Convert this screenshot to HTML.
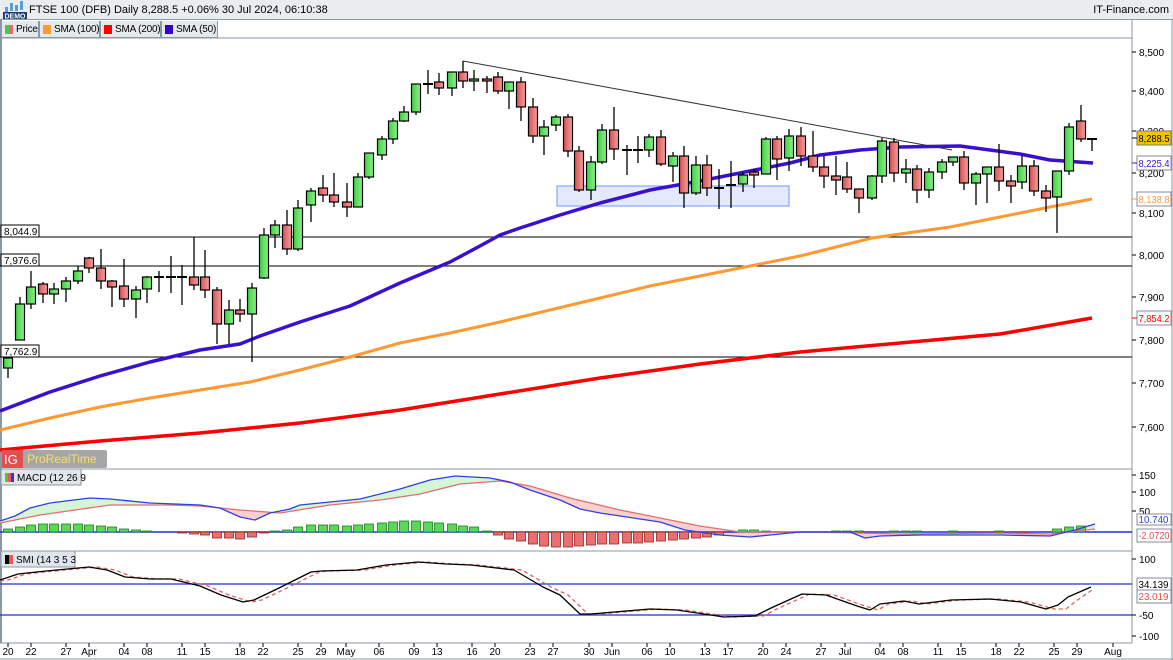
<!DOCTYPE html>
<html><head><meta charset="utf-8"><style>
*{margin:0;padding:0;box-sizing:border-box}
body{width:1173px;height:660px;overflow:hidden;background:#fff;font-family:"Liberation Sans",sans-serif;position:relative}
.hdr{position:absolute;left:0;top:0;width:1173px;height:20px;background:#e9edf0;border-bottom:1px solid #8a99a6}
.hdr .t{position:absolute;left:29px;top:4px;font-size:11px;color:#000}
.hdr .r{position:absolute;right:4px;top:4px;font-size:11px;color:#000}
.tabs{position:absolute;left:1px;top:21px;height:17px;display:flex}
.tab{height:17px;border:1px solid #8a99a6;border-top:none;background:#e4e9ed;font-size:10px;padding:0 1px 0 3px;display:flex;align-items:center;gap:3px;white-space:nowrap;overflow:hidden;letter-spacing:-0.2px}
.sq{width:8px;height:9px;display:inline-block;flex:none}
svg{position:absolute;left:0;top:0}
</style></head><body>
<div class="hdr">
<svg width="26" height="20" style="left:2px;top:0"><rect x="3" y="7" width="3" height="6" fill="#5aa0d8"/><rect x="8" y="3" width="3" height="8" fill="#5aa0d8"/><rect x="13" y="5" width="3" height="6" fill="#5aa0d8"/><rect x="18" y="1" width="3" height="9" fill="#5aa0d8"/><rect x="1" y="12" width="24" height="7" fill="#1a3a7a"/><text x="13" y="18.5" font-size="7" fill="#fff" text-anchor="middle" font-family="Liberation Sans" font-weight="bold">DEMO</text></svg>
<span class="t">FTSE 100 (DFB) Daily 8,288.5 +0.06% 30 Jul 2024, 06:10:38</span><span class="r">IT-Finance.com</span></div>
<div class="tabs">
<div class="tab" style="width:38px"><span class="sq" style="background:linear-gradient(90deg,#4c4 50%,#e66 50%)"></span>Price</div>
<div class="tab" style="width:61px"><span class="sq" style="background:#f93"></span>SMA (100)</div>
<div class="tab" style="width:61px"><span class="sq" style="background:#f00"></span>SMA (200)</div>
<div class="tab" style="width:57px"><span class="sq" style="background:#30c"></span>SMA (50)</div>
</div>
<svg id="c" width="1173" height="660" style="top:0" font-family="Liberation Sans" font-size="10"></svg>
<script>
var s='';
function L(a,b,c,d,col,w,ex){s+='<line x1="'+a+'" y1="'+b+'" x2="'+c+'" y2="'+d+'" stroke="'+col+'" stroke-width="'+(w||1)+'" '+(ex||'')+'/>';}
function P(pts,col,w,ex){s+='<polyline fill="none" points="'+pts.map(p=>p.join(',')).join(' ')+'" stroke="'+col+'" stroke-width="'+w+'" stroke-linejoin="round" '+(ex||'')+'/>';}
function T(x,y,t,col,anc,sz,ex){s+='<text x="'+x+'" y="'+y+'" fill="'+(col||'#000')+'" text-anchor="'+(anc||'start')+'" font-size="'+(sz||10)+'" '+(ex||'')+'>'+t+'</text>';}
s+='<defs><linearGradient id="g" x1="0" x2="1"><stop offset="0" stop-color="#3fcf3f"/><stop offset="1" stop-color="#8ef08e"/></linearGradient><linearGradient id="r" x1="0" x2="1"><stop offset="0" stop-color="#d85050"/><stop offset="1" stop-color="#f3a0a0"/></linearGradient></defs>';
L(0,38,1132,38,'#8a99a6');L(1132,20,1132,643,'#8a99a6');L(1,20,1,643,'#8a99a6',2);
L(0,469,1132,469,'#8a99a6');L(0,551,1132,551,'#8a99a6');L(0,643,1132,643,'#8a99a6');L(0,659,1173,659,'#8a99a6');L(1172,20,1172,660,'#8a99a6');
L(0,237,1132,237,'#000');L(0,266,1132,266,'#000');L(0,357,1132,357,'#000');
s+='<rect x="557" y="186" width="232" height="20" fill="#e4eafc" stroke="#6a9aff" stroke-width="1"/>';
L(463,61,952,150,'#333');L(463,61,463,72,'#333');
P([[0,450],[100,441],[200,433],[300,423],[400,410],[500,394],[600,378],[700,364],[800,352],[900,343],[1000,334],[1092,318]],'#f00',3.5);
P([[0,430],[50,418],[100,407],[150,398],[200,390],[250,382],[300,370],[350,357],[400,343],[450,333],[500,322],[550,310],[600,298],[650,286],[700,276],[750,266],[800,256],[872,238],[900,234],[950,227],[1000,217],[1050,207],[1092,199]],'#f93',3);
P([[0,411],[50,392],[100,376],[150,362],[200,350],[240,344],[260,336],[300,322],[350,306],[400,283],[450,262],[480,246],[500,235],[520,228],[560,215],[600,203],[650,190],[700,181],[750,171],[790,163],[820,155],[860,150],[900,147],[960,146],[990,150],[1020,154],[1050,160],[1093,163]],'#3a10d0',3.5);
var C=[[8,368,358,356,378],[20,340,304,297,340],[31,304,287,271,309],[43,284,294,282,303],[54,294,289,283,304],[66,289,281,277,302],[78,281,271,266,284],[89,258,268,257,273],[101,268,281,249,289],[112,281,287,280,307],[124,286,299,259,307],[136,299,290,286,318],[147,289,277,276,303],[159,277,277,271,292],[171,277,277,256,293],[182,277,277,265,305],[194,277,285,237,290],[205,277,290,250,298],[217,290,324,287,344],[229,324,310,300,344],[240,310,314,299,322],[252,314,288,283,362],[264,278,235,228,279],[275,235,225,220,248],[287,225,249,210,255],[298,249,208,200,251],[311,205,191,188,222],[323,188,195,175,202],[334,195,202,173,207],[347,202,207,183,217],[358,207,177,173,207],[369,177,153,153,179],[382,155,139,136,160],[393,139,121,118,144],[404,121,112,106,122],[416,112,84,84,115],[428,84,84,70,94],[439,82,88,73,95],[452,88,72,72,96],[463,72,81,61,88],[474,81,79,70,91],[487,79,81,76,93],[498,77,91,72,94],[509,91,82,82,109],[521,82,107,77,121],[533,107,136,98,143],[544,136,127,120,155],[556,125,117,115,131],[568,117,151,114,157],[579,151,190,146,192],[591,190,162,156,200],[602,162,130,124,164],[614,130,149,107,160],[627,150,150,145,175],[638,150,150,136,163],[649,150,137,134,157],[661,137,164,130,166],[673,166,156,152,182],[684,156,193,146,208],[696,193,165,156,195],[707,165,188,155,196],[719,188,188,169,209],[731,185,185,161,208],[743,184,175,172,192],[754,172,175,169,188],[766,174,139,137,174],[777,139,159,136,180],[789,158,136,129,171],[801,136,156,127,166],[813,156,167,131,172],[824,167,176,156,188],[836,176,180,156,195],[847,177,189,162,193],[859,189,198,189,213],[872,198,176,175,200],[882,176,141,138,183],[894,142,173,138,182],[906,173,169,159,183],[917,169,190,165,203],[929,190,172,168,198],[942,172,162,159,179],[953,162,157,157,166],[964,157,183,151,190],[976,183,174,172,205],[987,174,167,167,203],[999,167,181,144,191],[1011,181,186,175,203],[1022,182,166,156,189],[1034,166,191,160,196],[1046,191,198,185,212],[1057,197,171,171,233],[1069,171,127,123,175],[1081,121,139,105,142],[1092,139,138,138,151]];
C.forEach(function(k){var x=k[0],o=k[1],c=k[2],up=c<o,top=Math.min(o,c),h=Math.max(Math.abs(o-c),1);
L(x,k[3],x,k[4],'#000',1.3);
if(Math.abs(o-c)<1.5){L(x-5,o,x+5,o,'#000',2);}else s+='<rect x="'+(x-4.5)+'" y="'+top+'" width="9" height="'+h+'" fill="url(#'+(up?'g':'r')+')" stroke="#000" stroke-width="1.2"/>';});
[[225,'8,044.9'],[254,'7,976.6'],[345,'7,762.9']].forEach(function(a){s+='<rect x="1" y="'+a[0]+'" width="38" height="12" fill="#fff" stroke="#000"/>';T(4,a[0]+10,a[1]);});
[[52,'8,500'],[91,'8,400'],[131,'8,300'],[173,'8,200'],[213,'8,100'],[255,'8,000'],[297,'7,900'],[340,'7,800'],[383,'7,700'],[427,'7,600']].forEach(function(a){L(1132,a[0],1136,a[0],'#000');T(1139,a[0]+4,a[1]);});
function box(y,t,col,bg,bc){s+='<rect x="1137" y="'+(y-7)+'" width="34" height="14" fill="'+bg+'" stroke="'+bc+'"/>';L(1132,y,1137,y,col);T(1138.5,y+4,t,col,'start',10,'textLength="31" lengthAdjust="spacingAndGlyphs"');}
box(138,'8,288.5','#000','#f5c400','#777');box(163,'8,225.4','#3a10d0','#fff','#889');box(199,'8,138.8','#f93','#fff','#889');box(318,'7,854.2','#f00','#fff','#889');
s+='<rect x="2" y="450" width="105" height="18" rx="2" fill="#888" opacity="0.75"/><rect x="2" y="450" width="21" height="18" fill="#e05050"/>';T(4,464,'IG','#fff','start',13);T(27,463,'ProRealTime','#f5e06a','start',12);
function interp(pts,x){for(var i=1;i<pts.length;i++){if(x<=pts[i][0]){var a=pts[i-1],b=pts[i];return a[1]+(b[1]-a[1])*(x-a[0])/(b[0]-a[0]);}}return pts[pts.length-1][1];}
var M=[[0,521],[15,516],[30,508],[50,503],[90,498],[110,499],[150,503],[200,505],[220,508],[240,517],[255,520],[270,513],[290,509],[300,505],[330,502],[360,499],[400,489],[430,480],[455,476],[490,478],[510,482],[530,490],[560,500],[580,509],[600,513],[640,519],[660,522],[685,530],[720,535],[750,537],[770,535],[800,532],[850,532],[865,538],[880,536],[920,535],[1000,535],[1050,536],[1075,530],[1095,524]];
var S=[[0,523],[40,515],[110,505],[170,505],[200,506],[240,510],[280,513],[330,505],[380,500],[420,494],[460,484],[500,481],[530,486],[570,498],[620,510],[660,518],[700,526],[740,532],[800,532],[860,533],[900,534],[1000,533],[1050,534],[1095,529]];
for(var x=0;x<1095;x+=1){var a=interp(M,x),b=interp(S,x);L(x+0.5,a,x+0.5,b,a<b?'#d5f5d5':'#f8d0d0',1);}
L(0,532,1132,532,'#2030d0',1.5);
var H=[3,5,7,8,8,8,8,7,6,5,3,2,1,0,0,-1,-2,-3,-6,-6,-7,-5,-1,1,2,5,7,7,7,6,7,8,9,10,11,11,10,9,8,6,5,1,-3,-7,-9,-12,-14,-15,-15,-14,-13,-12,-12,-11,-11,-10,-9,-8,-7,-6,-5,-3,0,2,2,1,0,-1,0,0,0,1,1,1,0,0,1,1,1,0,0,1,0,0,0,1,0,-1,0,0,3,5,6];
C.forEach(function(k,i){var h=H[i]||0;if(h==0)return;var x=k[0];s+='<rect x="'+(x-4.5)+'" y="'+(h>0?532-h:532)+'" width="9" height="'+Math.abs(h)+'" fill="'+(h>0?'#5ad85a':'#e87070')+'" stroke="'+(h>0?'#1a801a':'#a02020')+'" stroke-width="0.8"/>';});
P(S,'#e07070',1.3);P(M,'#3040e0',1.3);
[[475,'150'],[492,'100'],[511,'50']].forEach(function(a){L(1132,a[0],1136,a[0],'#000');T(1139,a[0]+4,a[1]);});
s+='<rect x="1137" y="514" width="34" height="11" fill="#fff" stroke="#889"/>';T(1138.5,523,'10.740','#3040e0','start',10,'textLength="30" lengthAdjust="spacingAndGlyphs"');
s+='<rect x="1137" y="529" width="34" height="13" fill="#fff" stroke="#889"/>';T(1138.5,539,'-2.0720','#e05050','start',10,'textLength="31" lengthAdjust="spacingAndGlyphs"');
s+='<rect x="1" y="469" width="80" height="16" fill="#dfe5ea" stroke="#8a99a6"/><rect x="5" y="473" width="3" height="9" fill="#4c4"/><rect x="8" y="473" width="3" height="9" fill="#e55"/><rect x="11" y="473" width="3" height="9" fill="#33d"/>';T(17,481,'MACD (12 26 9','#000','start',10);
L(0,584,1132,584,'#2030d0',1.3);L(0,615,1132,615,'#2030d0',1.3);
var B=[[0,580],[18,574],[46,571],[89,567],[107,570],[125,577],[150,579],[171,579],[200,586],[221,595],[243,602],[254,600],[279,588],[311,572],[321,571],[357,570],[386,565],[418,562],[446,564],[471,565],[514,570],[543,587],[560,595],[580,614],[591,614],[650,609],[677,610],[724,617],[755,616],[771,608],[802,594],[826,595],[857,606],[870,610],[880,604],[904,601],[919,604],[951,600],[990,599],[1021,602],[1046,609],[1058,605],[1068,597],[1091,587]];
var R=B.map(function(p){return [p[0]+8,p[1]+ (p[0]>1050?4:0)];});R.unshift([0,581]);R[R.length-1]=[1092,590];
P(R,'#e06060',1.3,'stroke-dasharray="4,3"');P(B,'#000',1.3);
[[559,'100'],[615,'-50'],[636,'-100']].forEach(function(a){L(1132,a[0],1136,a[0],'#000');T(1139,a[0]+4,a[1]);});
s+='<rect x="1137" y="578" width="34" height="13" fill="#fff" stroke="#889"/>';T(1138.5,588,'34.139','#000','start',10,'textLength="30" lengthAdjust="spacingAndGlyphs"');
s+='<rect x="1137" y="590" width="34" height="13" fill="#fff" stroke="#889"/>';T(1138.5,600,'23.019','#e05050','start',10,'textLength="30" lengthAdjust="spacingAndGlyphs"');
s+='<rect x="1" y="551" width="74" height="16" fill="#dfe5ea" stroke="#8a99a6"/><rect x="5" y="555" width="4" height="9" fill="#000"/><rect x="9" y="555" width="4" height="9" fill="#e55"/>';T(16,563,'SMI (14 3 5 3','#000','start',10);
var D=[[8,'20'],[31,'22'],[66,'27'],[89,'Apr'],[124,'04'],[147,'08'],[182,'11'],[205,'15'],[240,'18'],[263,'22'],[298,'25'],[321,'29'],[346,'May'],[379,'06'],[414,'09'],[437,'13'],[472,'16'],[495,'20'],[530,'23'],[553,'27'],[589,'30'],[612,'Jun'],[647,'06'],[670,'10'],[705,'13'],[728,'17'],[763,'20'],[786,'24'],[821,'27'],[845,'Jul'],[880,'04'],[903,'08'],[938,'11'],[961,'15'],[996,'18'],[1019,'22'],[1054,'25'],[1077,'29'],[1113,'Aug']];
D.forEach(function(d){L(d[0],643,d[0],647,'#000');T(d[0],655,d[1],'#000','middle');});
document.getElementById('c').innerHTML=s;
</script>
</body></html>
